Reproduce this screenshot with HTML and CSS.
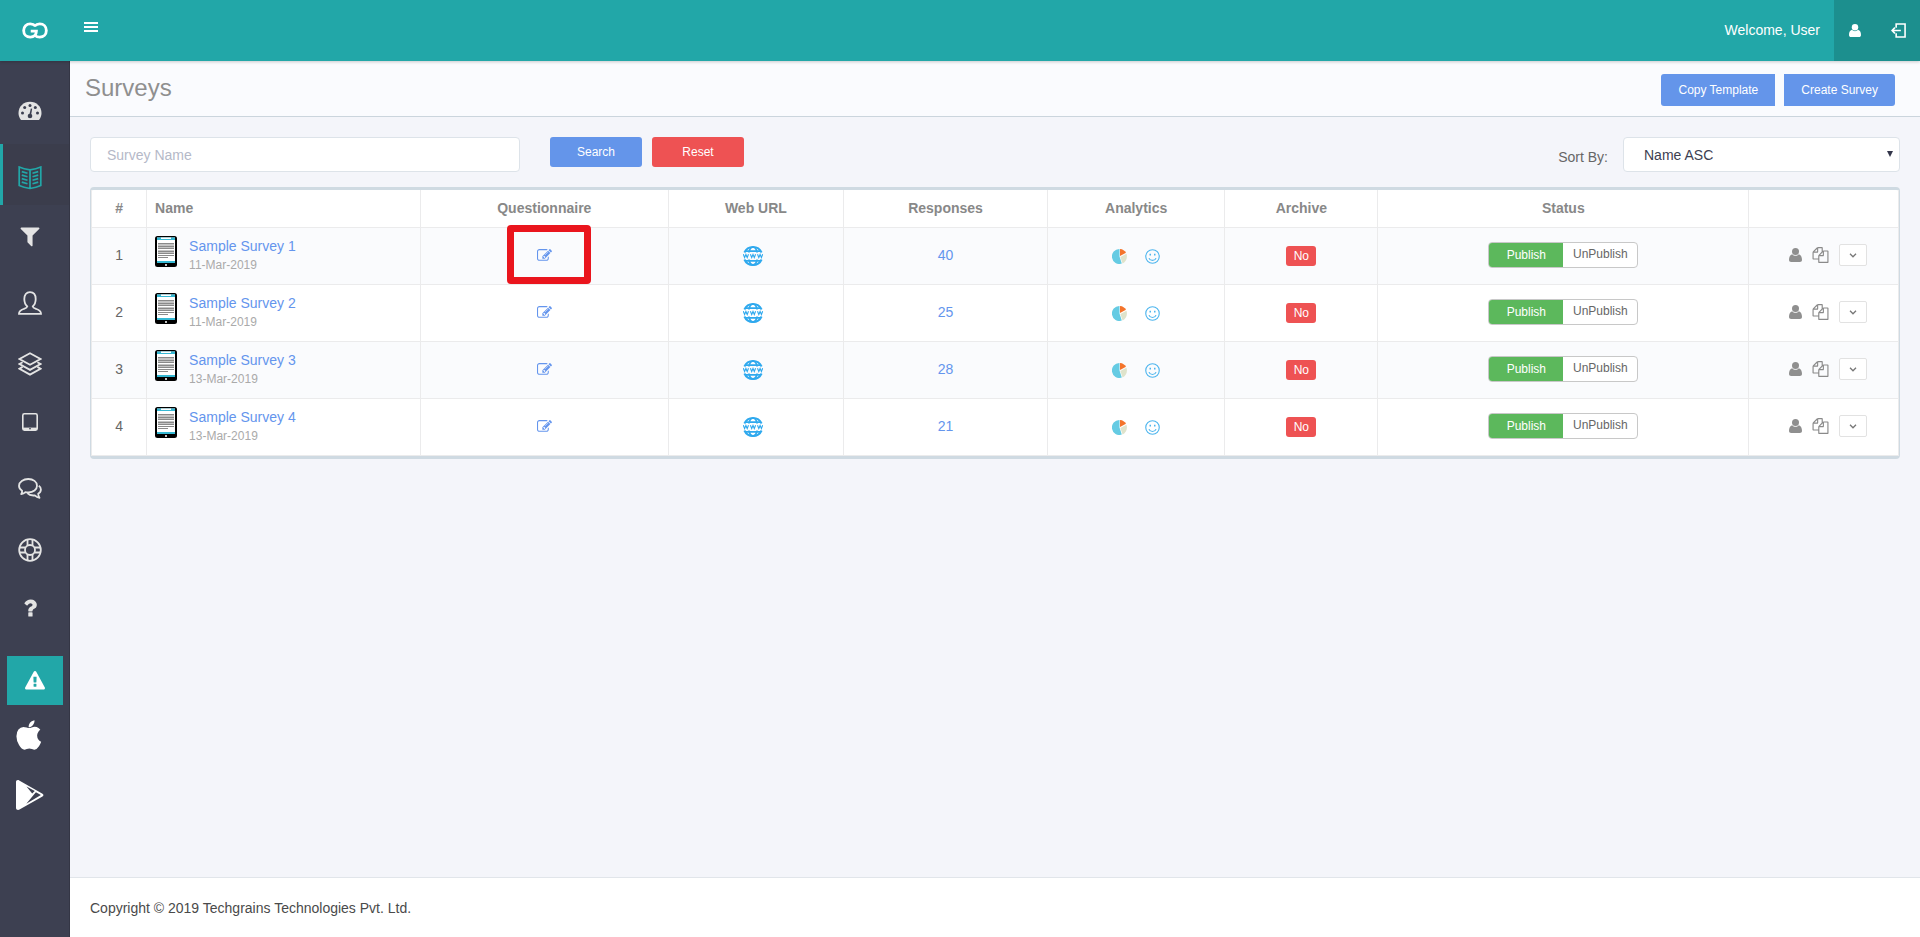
FILE: index.html
```html
<!DOCTYPE html>
<html lang="en">
<head>
<meta charset="utf-8">
<title>Surveys</title>
<link rel="stylesheet" href="styles.css">
</head>
<body>
<svg class="sprite" aria-hidden="true">
  <symbol id="i-logo" viewBox="0 0 28 18"><g fill="none" stroke="#fff" stroke-width="3"><path d="M14.500 4.200C13 2.600 11.200 2 9 2 4.900 2 2 5 2 9s2.900 7 7 7c4 0 6.500-2.500 6.500-6.400H9.500"/><path d="M13.500 4.400C15 2.800 16.700 2 19 2c4.100 0 7 3 7 7s-2.900 7-7 7c-2.200 0-3.800-.7-5.200-2.100"/></g></symbol>
  <symbol id="i-menu" viewBox="0 0 14 10"><path fill="#fff" d="M0 0h14v2H0zM0 4h14v2H0zM0 8h14v2H0z"/></symbol>
  <symbol id="i-person" viewBox="0 0 13 14"><circle cx="6.500" cy="3.500" r="3.500"/><path d="M3.200 6.200C1 6.800 0 9 0 11.800 0 13.200.8 14 2.200 14h8.600c1.400 0 2.200-.8 2.200-2.200C13 9 12 6.800 9.800 6.200 8.900 7.200 7.800 7.700 6.500 7.700S4.100 7.200 3.200 6.200z"/></symbol>
  <symbol id="i-logout" viewBox="0 0 16 16"><g fill="none" stroke="#fff" stroke-width="1.700"><path d="M5.500 5V1h9.500v14H5.500v-4M1 8h9.500M4.200 5L1.200 8l3 3"/></g></symbol>
  <symbol id="i-gauge" viewBox="0 0 24 24"><path fill="currentColor" d="M3 21C1.500 19.200.5 16.700.5 14 .5 7.600 5.600 2.800 12 2.800S23.500 7.600 23.500 14c0 2.700-1 5.200-2.500 7z"/><g fill="#3d4051"><circle cx="4.500" cy="14" r="1.500"/><circle cx="6.700" cy="8.600" r="1.500"/><circle cx="12" cy="6.400" r="1.500"/><circle cx="17.300" cy="8.600" r="1.500"/><circle cx="19.500" cy="14" r="1.500"/><circle cx="12" cy="17" r="2.300"/><path d="M11.300 16l1.500-6.500 1.400.3-1.200 6.500z"/></g></symbol>
  <symbol id="i-book" viewBox="0 0 24 24"><g fill="none" stroke="currentColor" stroke-width="1.700"><path d="M12 3.800C8.500 3.400 4.500 2.500 1.200 1v18.500c3.500 1.500 7.300 2.400 10.800 3 3.500-.6 7.300-1.500 10.800-3V1C19.500 2.500 15.500 3.400 12 3.800zM12 3.800v18.700"/><path d="M3.800 5.600l5.700 1.600M3.800 9.100l5.700 1.600M3.800 12.600l5.700 1.600M3.800 16.100l5.700 1.600M20.200 5.600l-5.700 1.600M20.200 9.100l-5.700 1.600M20.200 12.600l-5.700 1.600M20.200 16.100l-5.700 1.600"/></g></symbol>
  <symbol id="i-filter" viewBox="0 0 1792 1792"><path fill="currentColor" d="M1595 295q17 41-14 70l-493 493v742q0 42-39 59-13 5-25 5-27 0-45-19l-256-256q-19-19-19-45v-486l-493-493q-31-29-14-70 17-39 59-39h1280q42 0 59 39z"/></symbol>
  <symbol id="i-user" viewBox="0 0 24 24"><path fill="none" stroke="currentColor" stroke-width="1.800" d="M9.300 15.400C7.400 13.800 6.300 11 6.300 8c0-4 2-6.900 5.700-6.900S17.700 4 17.700 8c0 3-1.100 5.800-3 7.400.2 1.400 1.500 1.900 3.300 2.500 2.700.9 5 1.500 5 4.900H1c0-3.400 2.300-4 5-4.900 1.800-.6 3.100-1.100 3.300-2.500z"/></symbol>
  <symbol id="i-layers" viewBox="0 0 24 24"><g fill="none" stroke="currentColor" stroke-width="1.800"><path d="M12 1.200L22.500 7 12 12.800 1.500 7z"/><path d="M4.600 10.300L1.500 12 12 17.900 22.500 12l-3.100-1.700"/><path d="M4.600 14.900L1.500 16.700 12 22.600l10.500-5.900-3.100-1.800"/></g></symbol>
  <symbol id="i-tablet" viewBox="0 0 24 24"><rect x="4.800" y="3.800" width="14.400" height="16.400" rx="1.600" fill="none" stroke="currentColor" stroke-width="1.600"/><path fill="currentColor" d="M5 17.600h14V20H5z"/><path fill="#3d4051" d="M11 18.200h2v1h-2z"/></symbol>
  <symbol id="i-chat" viewBox="0 0 24 24"><g fill="none" stroke="currentColor" stroke-width="1.800" stroke-linejoin="round"><path d="M10.300 2C15.300 2 19 4.800 19 8.700s-3.700 6.800-8.700 6.800c-1 0-2-.1-2.900-.4-1.200 1.100-2.700 1.800-4.200 2 .8-1 1-2 .9-3.400C2.200 12.500 1 10.800 1 8.700 1 4.800 5.300 2 10.300 2z"/><path d="M20.800 8.700c1.300.9 2.100 2.200 2.100 3.800 0 1.800-1 3.300-2.700 4.300.1 1.500.4 2.800 1.300 4-1.700-.2-3.300-1-4.700-2.400-3 .3-5.800-.4-7.400-2.200"/></g></symbol>
  <symbol id="i-ring" viewBox="0 0 24 24"><g fill="none" stroke="currentColor" stroke-width="1.800"><circle cx="12" cy="12" r="10.800"/><circle cx="12" cy="12" r="5"/><path d="M9.500 1.500v6M14.500 1.500v6M9.500 16.500v6M14.500 16.500v6M1.500 9.500h6M1.500 14.500h6M16.500 9.500h6M16.500 14.500h6"/></g></symbol>
  <symbol id="i-help" viewBox="0 0 1792 1792"><path fill="currentColor" d="M1088 1256v240q0 16-12 28t-28 12h-240q-16 0-28-12t-12-28v-240q0-16 12-28t28-12h240q16 0 28 12t12 28zm316-600q0 54-15.500 101t-35 76.500-55 59.500-57.500 43.500-61 35.500q-41 23-68.500 65t-27.500 67q0 17-12 32.500t-28 15.500h-240q-15 0-25.500-18.500t-10.500-37.500v-45q0-83 65-156.500t143-108.500q59-27 84-56t25-76q0-42-46.500-74t-107.500-32q-65 0-108 29-35 25-107 115-13 16-31 16-12 0-25-8l-164-125q-13-10-15.500-25t5.500-28q160-266 464-266 80 0 161 31t146 83 106 127.500 41 158.500z"/></symbol>
  <symbol id="i-warn" viewBox="0 0 1792 1792"><path fill="#fff" d="M1024 1375v-190q0-14-9.500-23.500t-22.500-9.500h-192q-13 0-22.500 9.500t-9.500 23.500v190q0 14 9.500 23.500t22.500 9.500h192q13 0 22.500-9.500t9.500-23.500zm-2-374l18-459q0-12-10-19-13-11-24-11h-220q-11 0-24 11-10 7-10 21l17 457q0 10 10 16.500t24 6.500h185q14 0 23.500-6.500t10.500-16.500zm-14-934l768 1408q35 63-2 126-17 29-46.500 46t-63.500 17h-1536q-34 0-63.500-17t-46.500-46q-37-63-2-126l768-1408q17-31 47-49t65-18 65 18 47 49z"/></symbol>
  <symbol id="i-apple" viewBox="200 -10 1400 1690"><path fill="#fff" d="M1585 1215q-39 125-123 250-129 196-257 196-49 0-140-32-86-32-151-32-61 0-142 33-81 34-132 34-152 0-301-259-147-261-147-503 0-228 113-374 113-144 284-144 72 0 177 30 104 30 138 30 45 0 143-34 102-34 173-34 119 0 213 65 52 36 104 100-79 67-114 118-65 94-65 207 0 124 69 223t158 126zm-376-1173q0 61-29 136-30 75-93 138-54 54-108 72-37 11-104 17 3-149 78-257 74-107 250-148 1 3 2.500 11t2.500 11q0 4 .5 10t.5 10z"/></symbol>
  <symbol id="i-play" viewBox="0 0 28 30"><path fill="#fff" d="M0 2C0 .3 1.700-.4 3.200.5L26.500 13.700c1.300.8 1.300 2 0 2.800L3.500 29.600C1.800 30.400 0 29.700 0 28z"/><path fill="#3d4051" d="M10.500 6.600l8.300 4.300-2.600 2.600zM19.900 12.200l5 2.900L10.300 23.800 18 14.600z"/></symbol>
  <symbol id="i-device" viewBox="0 0 22 31"><rect width="22" height="31" rx="2.500" fill="#000"/><path fill="#fff" d="M2 1.500h18V27H2z"/><path fill="#35b8d3" d="M2 1.500h18V4H2zM2 25h18v2H2z"/><path fill="#fff" d="M6 1.500h10V3H6zM10 28.200h2v1.600h-2z"/><path fill="#c4c4c4" d="M3 8h16v4H3zM3 14h16v4H3z"/><path fill="#8a8a8a" d="M3 7h16v1H3zM3 10h16v1H3zM3 12h16v1H3zM3 15h16v1H3zM3 17h16v1H3zM3 19h16v1H3zM3 21h10v1H3z"/></symbol>
  <symbol id="i-edit" viewBox="0 0 1792 1792"><path fill="#6495ed" d="M888 1184l116-116-152-152-116 116v56h96v96h56zm440-720q-16-16-33 1l-350 350q-17 17-1 33t33-1l350-350q17-17 1-33zm80 594v190q0 119-84.500 203.500t-203.500 84.500h-832q-119 0-203.500-84.500t-84.500-203.500v-832q0-119 84.500-203.500t203.500-84.500h832q63 0 117 25 15 7 18 23 3 17-9 29l-49 49q-14 14-32 8-23-6-45-6h-832q-66 0-113 47t-47 113v832q0 66 47 113t113 47h832q66 0 113-47t47-113v-126q0-13 9-22l64-64q15-15 35-7t20 29zm-96-738l288 288-672 672h-288v-288zm444 132l-92 92-288-288 92-92q28-28 68-28t68 28l152 152q28 28 28 68t-28 68z"/></symbol>
  <symbol id="i-web" viewBox="0 0 20 20"><g fill="none" stroke="#2fa9ee"><path stroke-width="2" d="M1.400 6.500C3 3 6.200 1 10 1s7 2 8.600 5.500M1.400 13.500C3 17 6.200 19 10 19s7-2 8.600-5.500"/><path stroke-width="1.700" d="M5.700 6.500C6.500 3.500 8 1 10 1s3.500 2.500 4.300 5.500M5.700 13.500C6.500 16.500 8 19 10 19s3.500-2.500 4.300-5.500M2.500 5.200h15M2.500 14.800h15"/><path stroke-width="1.100" d="M.3 8.200l1.300 3.300 1.300-3 1.300 3 1.300-3.300M7.400 8.200l1.300 3.300 1.300-3 1.300 3 1.300-3.300M14.500 8.200l1.300 3.300 1.300-3 1.300 3 1.300-3.300"/></g></symbol>
  <symbol id="i-pie" viewBox="0 0 15 15"><path fill="#65cbe3" d="M7.500 0v7.500L9.800 14.600A7.500 7.500 0 1 1 7.500 0z"/><path fill="#f4742b" d="M8 0c2.700.2 4.800 1.600 6 3.700L8 7z"/><path fill="#dfe3cb" d="M14.500 4.800c1.200 4-.2 8-3.900 9.700L8.300 7.900z"/></symbol>
  <symbol id="i-smile" viewBox="0 0 16 16"><g fill="none" stroke="#4db5ee" stroke-width="1.200"><circle cx="8" cy="8" r="7.200"/><path d="M4.200 9.700c.6 1.600 2 2.500 3.800 2.500s3.200-.9 3.800-2.500"/></g><path fill="#4db5ee" d="M4.800 5h1.600v1.800H4.800zM9.600 5h1.600v1.800H9.600z"/></symbol>
  <symbol id="i-copy" viewBox="0 0 1792 1792"><path fill="#8a8a8a" d="M1696 384q40 0 68 28t28 68v1216q0 40-28 68t-68 28h-960q-40 0-68-28t-28-68v-288h-544q-40 0-68-28t-28-68v-672q0-40 20-88t48-76l408-408q28-28 76-48t88-20h416q40 0 68 28t28 68v328q68-40 128-40h416zm-544 213l-299 299h299v-299zm-640-384l-299 299h299v-299zm196 647l316-316v-416h-384v416q0 40-28 68t-68 28h-416v640h512v-256q0-40 20-88t48-76zm956 804v-1152h-384v416q0 40-28 68t-68 28h-416v640h896z"/></symbol>
  <symbol id="i-down" viewBox="0 0 8 5"><path fill="none" stroke="#777" stroke-width="1.300" d="M1 .8l3 3 3-3"/></symbol>
</svg>

<header class="topbar">
  <a class="logo" href="#" aria-label="Home"><svg><use href="#i-logo"/></svg></a>
  <button class="menu-toggle" type="button" aria-label="Toggle menu"><svg><use href="#i-menu"/></svg></button>
  <span class="welcome">Welcome, User</span>
  <nav class="account">
    <a href="#" aria-label="Profile"><svg class="profile-icon"><use href="#i-person"/></svg></a>
    <a href="#" aria-label="Log out"><svg class="logout-icon"><use href="#i-logout"/></svg></a>
  </nav>
</header>

<div class="shell">
  <nav class="sidebar">
    <a class="side-item short" href="#" aria-label="Dashboard"><svg><use href="#i-gauge"/></svg></a>
    <a class="side-item active" href="#" aria-label="Surveys"><svg><use href="#i-book"/></svg></a>
    <a class="side-item short" href="#" aria-label="Filters"><svg><use href="#i-filter"/></svg></a>
    <a class="side-item" href="#" aria-label="Users"><svg><use href="#i-user"/></svg></a>
    <a class="side-item" href="#" aria-label="Groups"><svg><use href="#i-layers"/></svg></a>
    <a class="side-item short" href="#" aria-label="Devices"><svg><use href="#i-tablet"/></svg></a>
    <a class="side-item" href="#" aria-label="Feedback"><svg><use href="#i-chat"/></svg></a>
    <a class="side-item" href="#" aria-label="Support"><svg><use href="#i-ring"/></svg></a>
    <a class="side-item short" href="#" aria-label="Help"><svg><use href="#i-help"/></svg></a>
    <a class="alert" href="#" aria-label="Alerts"><svg><use href="#i-warn"/></svg></a>
    <a class="store" href="#" aria-label="App Store"><svg class="apple-icon"><use href="#i-apple"/></svg></a>
    <a class="store" href="#" aria-label="Google Play"><svg class="play-icon"><use href="#i-play"/></svg></a>
  </nav>

  <div class="page">
    <div class="page-head">
      <h1>Surveys</h1>
      <div class="head-actions">
        <button class="btn btn-blue copy-btn" type="button">Copy Template</button>
        <button class="btn btn-blue create-btn" type="button">Create Survey</button>
      </div>
    </div>

    <main class="content">
      <form class="filters">
        <input class="field search-field" type="text" placeholder="Survey Name" aria-label="Survey Name">
        <div class="filter-buttons">
          <button class="btn btn-blue" type="button">Search</button>
          <button class="btn btn-red" type="reset">Reset</button>
        </div>
        <label class="sort-label" for="sort">Sort By:</label>
        <div class="select-wrap">
          <select class="field" id="sort"><option>Name ASC</option><option>Name DESC</option></select>
          <svg class="select-arrow" viewBox="0 0 6 6"><path d="M0 0h6L3 6z" fill="#33364a"/></svg>
        </div>
      </form>

      <div class="table-frame">
        <table>
          <colgroup><col class="c-num"><col class="c-name"><col class="c-quest"><col class="c-url"><col class="c-resp"><col class="c-ana"><col class="c-arch"><col class="c-status"><col></colgroup>
          <thead>
            <tr><th>#</th><th class="left">Name</th><th>Questionnaire</th><th>Web URL</th><th>Responses</th><th>Analytics</th><th>Archive</th><th>Status</th><th></th></tr>
          </thead>
          <tbody>
            <tr>
              <td>1</td>
              <td><div class="survey"><svg><use href="#i-device"/></svg><div><a href="#">Sample Survey 1</a><small>11-Mar-2019</small></div></div></td>
              <td class="marked"><a class="cell-icons" href="#" aria-label="Edit questionnaire"><svg class="edit"><use href="#i-edit"/></svg></a><span class="marker"></span></td>
              <td><a class="cell-icons web" href="#" aria-label="Web URL"><svg><use href="#i-web"/></svg></a></td>
              <td><a href="#">40</a></td>
              <td><div class="cell-icons analytics"><a href="#" aria-label="Charts"><svg><use href="#i-pie"/></svg></a><a href="#" aria-label="Sentiment"><svg><use href="#i-smile"/></svg></a></div></td>
              <td><button class="badge" type="button">No</button></td>
              <td><div class="switch"><button class="on" type="button">Publish</button><button type="button">UnPublish</button></div></td>
              <td><div class="row-actions"><a href="#" aria-label="Assign"><svg class="assign"><use href="#i-person"/></svg></a><a href="#" aria-label="Copy"><svg class="copy"><use href="#i-copy"/></svg></a><button type="button" aria-label="More"><svg class="down"><use href="#i-down"/></svg></button></div></td>
            </tr>
            <tr>
              <td>2</td>
              <td><div class="survey"><svg><use href="#i-device"/></svg><div><a href="#">Sample Survey 2</a><small>11-Mar-2019</small></div></div></td>
              <td><a class="cell-icons" href="#" aria-label="Edit questionnaire"><svg class="edit"><use href="#i-edit"/></svg></a></td>
              <td><a class="cell-icons web" href="#" aria-label="Web URL"><svg><use href="#i-web"/></svg></a></td>
              <td><a href="#">25</a></td>
              <td><div class="cell-icons analytics"><a href="#" aria-label="Charts"><svg><use href="#i-pie"/></svg></a><a href="#" aria-label="Sentiment"><svg><use href="#i-smile"/></svg></a></div></td>
              <td><button class="badge" type="button">No</button></td>
              <td><div class="switch"><button class="on" type="button">Publish</button><button type="button">UnPublish</button></div></td>
              <td><div class="row-actions"><a href="#" aria-label="Assign"><svg class="assign"><use href="#i-person"/></svg></a><a href="#" aria-label="Copy"><svg class="copy"><use href="#i-copy"/></svg></a><button type="button" aria-label="More"><svg class="down"><use href="#i-down"/></svg></button></div></td>
            </tr>
            <tr>
              <td>3</td>
              <td><div class="survey"><svg><use href="#i-device"/></svg><div><a href="#">Sample Survey 3</a><small>13-Mar-2019</small></div></div></td>
              <td><a class="cell-icons" href="#" aria-label="Edit questionnaire"><svg class="edit"><use href="#i-edit"/></svg></a></td>
              <td><a class="cell-icons web" href="#" aria-label="Web URL"><svg><use href="#i-web"/></svg></a></td>
              <td><a href="#">28</a></td>
              <td><div class="cell-icons analytics"><a href="#" aria-label="Charts"><svg><use href="#i-pie"/></svg></a><a href="#" aria-label="Sentiment"><svg><use href="#i-smile"/></svg></a></div></td>
              <td><button class="badge" type="button">No</button></td>
              <td><div class="switch"><button class="on" type="button">Publish</button><button type="button">UnPublish</button></div></td>
              <td><div class="row-actions"><a href="#" aria-label="Assign"><svg class="assign"><use href="#i-person"/></svg></a><a href="#" aria-label="Copy"><svg class="copy"><use href="#i-copy"/></svg></a><button type="button" aria-label="More"><svg class="down"><use href="#i-down"/></svg></button></div></td>
            </tr>
            <tr>
              <td>4</td>
              <td><div class="survey"><svg><use href="#i-device"/></svg><div><a href="#">Sample Survey 4</a><small>13-Mar-2019</small></div></div></td>
              <td><a class="cell-icons" href="#" aria-label="Edit questionnaire"><svg class="edit"><use href="#i-edit"/></svg></a></td>
              <td><a class="cell-icons web" href="#" aria-label="Web URL"><svg><use href="#i-web"/></svg></a></td>
              <td><a href="#">21</a></td>
              <td><div class="cell-icons analytics"><a href="#" aria-label="Charts"><svg><use href="#i-pie"/></svg></a><a href="#" aria-label="Sentiment"><svg><use href="#i-smile"/></svg></a></div></td>
              <td><button class="badge" type="button">No</button></td>
              <td><div class="switch"><button class="on" type="button">Publish</button><button type="button">UnPublish</button></div></td>
              <td><div class="row-actions"><a href="#" aria-label="Assign"><svg class="assign"><use href="#i-person"/></svg></a><a href="#" aria-label="Copy"><svg class="copy"><use href="#i-copy"/></svg></a><button type="button" aria-label="More"><svg class="down"><use href="#i-down"/></svg></button></div></td>
            </tr>
          </tbody>
        </table>
      </div>
    </main>

    <footer class="footer">Copyright © 2019 Techgrains Technologies Pvt. Ltd.</footer>
  </div>
</div>
</body>
</html>
```

FILE: styles.css
```css
* { box-sizing: border-box; }

body {
  margin: 0;
  min-height: 100vh;
  display: flex;
  flex-direction: column;
  background: #f4f5fa;
  color: #666;
  font: 14px/20px "Liberation Sans", Arial, sans-serif;
}

a { color: #6495ed; text-decoration: none; }
button, input, select { font: inherit; margin: 0; }
button { cursor: pointer; }
svg { display: block; flex: none; }
.sprite { position: absolute; width: 0; height: 0; }

/* Top bar */
.topbar {
  display: flex;
  align-items: center;
  height: 61px;
  padding-bottom: 1px;
  background: #22a7a8;
  color: #fff;
  box-shadow: 0 1px 3px rgba(0, 0, 0, .2);
  position: relative;
}
.logo { width: 70px; display: flex; justify-content: center; }
.logo svg { width: 28px; height: 17px; }
.menu-toggle { border: 0; background: none; padding: 0 14px 6px; }
.menu-toggle svg { width: 14px; height: 10px; }
.welcome { margin-left: auto; padding-right: 14px; }
.account {
  align-self: stretch;
  display: flex;
  align-items: center;
  gap: 30px;
  margin-bottom: -1px;
  padding: 0 14px 1px 15px;
  background: #1c8f8e;
}
.account svg { fill: #fff; }
.profile-icon { width: 12px; height: 13px; }
.logout-icon { width: 15px; height: 15px; }

/* Sidebar */
.shell { flex: 1; display: flex; }
.sidebar {
  width: 70px;
  flex: none;
  padding-top: 19px;
  background: #3d4051;
  border-right: 1px solid #343645;
}
.side-item {
  display: block;
  height: 61px;
  padding: 22px 0 0 18px;
  color: #e4e4e4;
}
.side-item.short { height: 64px; padding-top: 19px; }
.side-item.active {
  padding-left: 15px;
  border-left: 3px solid #22a7a8;
  background: #3b3d4c;
  color: #22a7a8;
}
.side-item svg { width: 24px; height: 24px; }
.alert {
  display: flex;
  align-items: center;
  justify-content: center;
  height: 49px;
  margin: 15px 6px 0 7px;
  background: #22a7a8;
}
.alert svg { width: 20px; height: 20px; }
.store { display: block; padding: 15px 0 15px 16px; }
.apple-icon { width: 26px; height: 30px; }
.play-icon { width: 28px; height: 30px; }

/* Page */
.page { flex: 1; min-width: 0; display: flex; flex-direction: column; }
.page-head {
  display: flex;
  align-items: center;
  justify-content: space-between;
  height: 56px;
  padding: 0 25px 0 15px;
  background: #fafbfe;
  border-bottom: 1px solid #cbd5dd;
}
h1 { margin: 0; padding-bottom: 2px; font-size: 24px; line-height: 28px; font-weight: 400; color: #8f8f8f; }
.head-actions { display: flex; gap: 9px; padding-top: 3px; }
.btn {
  border: 0;
  border-radius: 3px;
  padding: 0;
  color: #fff;
  font-size: 12px;
  line-height: 30px;
}
.btn-blue { background: #6495ea; }
.btn-red { background: #ee5253; }
.head-actions .btn { padding: 0 17px; line-height: 32px; }
.copy-btn { border-radius: 3px 0 0 3px; }
.create-btn { border-radius: 0 3px 3px 0; }

.content { flex: 1; padding: 20px 20px 40px; }
.filters { display: flex; align-items: flex-start; margin-bottom: 15px; }
.field {
  width: 100%;
  height: 35px;
  border: 1px solid #dde3e9;
  border-radius: 4px;
  padding: 0 16px;
  background: #fff;
  color: #3d4051;
  font-size: 14px;
}
.field::placeholder { color: #b5b9c8; }
.search-field { flex: 0 1 430px; }
.filter-buttons { display: flex; gap: 10px; margin-left: 30px; }
.filter-buttons .btn { width: 92px; }
.sort-label { margin-left: auto; padding: 10px 15px 0 0; }
.select-wrap { position: relative; flex: 0 1 277px; }
.select-wrap .field { appearance: none; padding-left: 20px; }
.select-arrow { position: absolute; right: 7px; top: 14px; width: 6px; height: 6px; pointer-events: none; }

/* Table */
.table-frame {
  border: solid #cfdae2;
  border-width: 3px 1px;
  border-radius: 4px;
  background: #fff;
}
table { width: 100%; border-collapse: collapse; table-layout: fixed; }
.c-num { width: 3.05%; }
.c-name { width: 15.15%; }
.c-quest { width: 13.72%; }
.c-url { width: 9.7%; }
.c-resp { width: 11.29%; }
.c-ana { width: 9.81%; }
.c-arch { width: 8.47%; }
.c-status { width: 20.53%; }
th, td { border: 1px solid #ebebec; text-align: center; padding: 0 8px 1px; vertical-align: middle; }
thead th { border-top: 0; height: 37px; padding-bottom: 0; color: #888; }
th.left { text-align: left; }
tbody tr { height: 57px; }
tbody tr:nth-child(odd) { background: #fafbfd; }

.survey { display: flex; gap: 12px; padding-bottom: 1px; text-align: left; }
.survey svg { width: 22px; height: 31px; }
.survey a, .survey small { display: block; }
.survey small { font-size: 12px; line-height: 18px; color: #aaa; }

.cell-icons { display: flex; justify-content: center; align-items: center; }
.edit { width: 15px; height: 15px; }
.web { padding: 2px 5px 0 0; }
.web svg { width: 20px; height: 20px; }
.analytics { gap: 18px; padding-top: 2px; }
.analytics svg { width: 15px; height: 15px; }

.marked { position: relative; }
.marker {
  position: absolute;
  left: 35%;
  top: -3px;
  width: 84px;
  height: 59px;
  border: 7px solid #ea151d;
  border-radius: 4px;
  pointer-events: none;
}

.badge {
  width: 30px;
  height: 20px;
  margin-top: 2px;
  padding: 0;
  border: 0;
  border-radius: 3px;
  background: #ee5253;
  color: #fff;
  font-size: 12px;
  line-height: 18px;
}
.switch {
  display: inline-flex;
  width: 150px;
  height: 26px;
  vertical-align: middle;
  border: 1px solid #c8c8c8;
  border-radius: 4px;
  background: #fff;
  overflow: hidden;
}
.switch button {
  flex: 1;
  border: 0;
  padding: 0 0 2px;
  background: none;
  color: #666;
  font-size: 12px;
  line-height: 20px;
}
.switch .on { padding: 0; background: #5cb85c; color: #fff; }

.row-actions { display: flex; align-items: center; justify-content: center; gap: 10px; padding-left: 8px; }
.row-actions button {
  display: flex;
  align-items: center;
  justify-content: center;
  width: 28px;
  height: 22px;
  padding: 0;
  border: 1px solid #e2e2e2;
  border-radius: 2px;
  background: #fff;
}
.assign { width: 13px; height: 14px; fill: #8f8f8f; }
.copy { width: 17px; height: 16px; }
.down { width: 8px; height: 5px; }

.footer {
  padding: 20px 20px 19px;
  background: #fff;
  border-top: 1px solid #e1e5ea;
  color: #4a4a4a;
}
```
